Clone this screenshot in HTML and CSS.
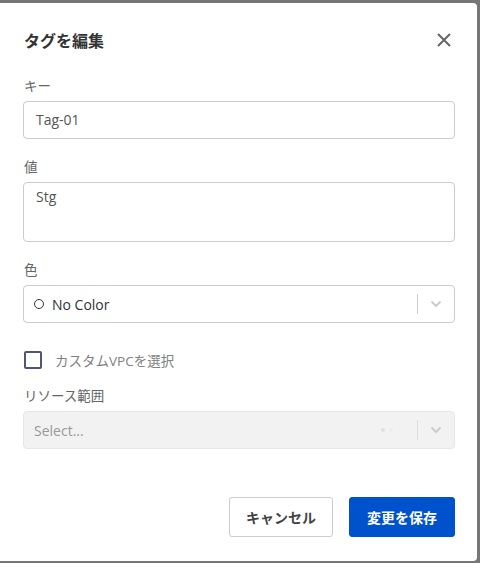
FILE: index.html
```html
<!DOCTYPE html>
<html lang="ja">
<head>
<meta charset="utf-8">
<title>タグを編集</title>
<link rel="stylesheet" href="styles.css">
</head>
<body>
<div class="dialog">
  <div class="header">
    <h1 class="title">タグを編集</h1>
    <button class="close" aria-label="閉じる">
      <svg width="14" height="14" viewBox="0 0 14 14"><path d="M1 1L13 13M13 1L1 13" stroke="#666" stroke-width="2" fill="none"/></svg>
    </button>
  </div>

  <div class="field first">
    <div class="label">キー</div>
    <div class="input">Tag-01</div>
  </div>

  <div class="field">
    <div class="label">値</div>
    <div class="input textarea">Stg</div>
  </div>

  <div class="field">
    <div class="label">色</div>
    <div class="select">
      <div class="value"><span class="ring"></span>No Color</div>
      <span class="sep"></span>
      <span class="arrow"><svg width="12" height="8" viewBox="0 0 12 8"><path d="M1.5 1.5L6 6L10.5 1.5" stroke="#cccccc" stroke-width="2" fill="none"/></svg></span>
    </div>
  </div>

  <label class="check">
    <span class="box"></span>
    <span class="check-text">カスタムVPCを選択</span>
  </label>

  <div class="field resource">
    <div class="label">リソース範囲</div>
    <div class="select disabled">
      <div class="value placeholder">Select...</div>
      <span class="dots"><i></i><i></i></span>
      <span class="sep"></span>
      <span class="arrow"><svg width="12" height="8" viewBox="0 0 12 8"><path d="M1.5 1.5L6 6L10.5 1.5" stroke="#cccccc" stroke-width="2" fill="none"/></svg></span>
    </div>
  </div>

  <div class="footer">
    <button class="btn cancel">キャンセル</button>
    <button class="btn primary">変更を保存</button>
  </div>
</div>
</body>
</html>
```

FILE: styles.css
```css
html, body {
  margin: 0;
  padding: 0;
  background: #767676;
  height: 563px;
  overflow: hidden;
}
body {
  padding-top: 3px;
  font-family: "Open Sans", "Noto Sans CJK JP", sans-serif;
  box-sizing: border-box;
}
.dialog {
  width: 477px;
  height: 558px;
  background: #fff;
  border-radius: 0 4px 4px 0;
  padding: 25px 22px 0 23px;
  box-sizing: border-box;
  display: flex;
  flex-direction: column;
}
.header {
  display: flex;
  align-items: center;
  justify-content: space-between;
  height: 24px;
  padding-left: 1px;
}
.title {
  margin: 0;
  font-size: 16px;
  line-height: 24px;
  font-weight: 700;
  color: #333;
  font-family: "Noto Sans CJK JP", sans-serif;
}
.close {
  border: 0;
  background: none;
  padding: 0;
  margin-right: 4px;
  width: 14px;
  height: 14px;
  display: flex;
}
.field { margin-top: 18px; }
.field.first { margin-top: 24px; }
.label {
  font-family: "Noto Sans CJK JP", sans-serif;
  font-size: 13.5px;
  line-height: 18px;
  color: #666;
  margin-bottom: 7px;
  padding-left: 1px;
}
.input {
  height: 38px;
  border: 1px solid #cccccc;
  border-radius: 4px;
  box-sizing: border-box;
  padding: 0 12px;
  font-size: 14px;
  line-height: 36px;
  color: #555;
}
.textarea {
  height: 60px;
  line-height: 20px;
  padding-top: 4px;
}
.select {
  height: 38px;
  border: 1px solid #cccccc;
  border-radius: 4px;
  box-sizing: border-box;
  display: flex;
  align-items: center;
  font-size: 14px;
  color: #333;
}
.select .value {
  flex: 1;
  display: flex;
  align-items: center;
  padding-left: 10px;
}
.ring {
  width: 10px;
  height: 10px;
  box-sizing: border-box;
  border: 1.5px solid #333;
  border-radius: 50%;
  margin-right: 8px;
}
.sep {
  width: 1px;
  height: 20px;
  background: #cccccc;
}
.arrow {
  width: 36px;
  display: flex;
  justify-content: center;
  align-items: center;
}
.check {
  display: flex;
  align-items: center;
  margin-top: 28px;
  padding-left: 1px;
  height: 18px;
}
.box {
  width: 18px;
  height: 18px;
  box-sizing: border-box;
  border: 2px solid #505673;
  border-radius: 2px;
  margin-right: 13px;
}
.check-text {
  font-family: "Open Sans", "Noto Sans CJK JP", sans-serif;
  font-size: 13.5px;
  color: #808080;
}
.field.resource { margin-top: 17px; }
.select.disabled {
  background: #f2f2f2;
  border-color: #e6e6e6;
}
.placeholder {
  color: #999;
}
.dots {
  display: flex;
  gap: 4px;
  margin-right: 24px;
}
.dots i {
  width: 4px;
  height: 4px;
  border-radius: 50%;
  background: #e0e0e0;
}
.dots i + i { background: #ececec; }
.disabled .sep { background: #dedede; }
.footer {
  margin-top: 48px;
  display: flex;
  justify-content: flex-end;
  gap: 16px;
}
.btn {
  height: 40px;
  border-radius: 3px;
  font-family: "Noto Sans CJK JP", sans-serif;
  font-size: 14px;
  font-weight: 700;
  padding: 0;
}
.cancel {
  width: 104px;
  background: #fff;
  border: 1px solid #cccccc;
  color: #444;
}
.primary {
  width: 106px;
  background: #0052cc;
  border: 1px solid #0052cc;
  color: #fff;
}
```
